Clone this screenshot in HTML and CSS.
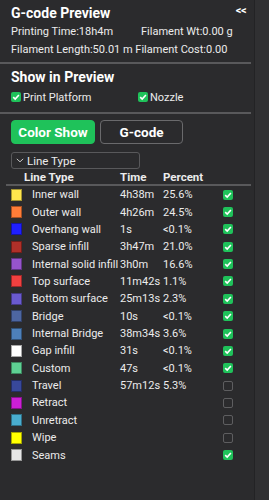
FILE: index.html
```html
<!DOCTYPE html>
<html>
<head>
<meta charset="utf-8">
<link rel="stylesheet" href="styles.css">
</head>
<body>
<div class="app">
  <div class="panel">
    <div class="title-row">
      <span class="title">G-code Preview</span>
      <span class="collapse">&lt;&lt;</span>
    </div>
    <div class="info-row">
      <span class="info-a">Printing Time:18h4m</span>
      <span>Filament Wt:0.00 g</span>
    </div>
    <div class="info-row">
      <span>Filament Length:50.01 m Filament Cost:0.00</span>
    </div>
    <div class="sep"></div>
    <div class="section-title">Show in Preview</div>
    <div class="show-row">
      <label class="opt opt-a"><span class="cb on"><svg viewBox="0 0 10 10"><path d="M2.2 5.2 L4.2 7.1 L7.9 3" /></svg></span>Print Platform</label>
      <label class="opt"><span class="cb on"><svg viewBox="0 0 10 10"><path d="M2.2 5.2 L4.2 7.1 L7.9 3" /></svg></span>Nozzle</label>
    </div>
    <div class="sep"></div>
    <div class="buttons">
      <button class="btn btn-green">Color Show</button>
      <button class="btn btn-dark">G-code</button>
    </div>
    <div class="dropdown">
      <svg class="chev" viewBox="0 0 10 6"><path d="M1 1 L5 4.6 L9 1" /></svg>
      <span>Line Type</span>
    </div>
    <div class="thead">
      <span class="th-name">Line Type</span>
      <span>Time</span>
      <span>Percent</span>
    </div>
    <div class="sep sep-table"></div>
    <div class="rows" id="rows"></div>
  </div>
  <div class="divider"></div>
  <div class="side"></div>
</div>
<script src="script.js"></script>
</body>
</html>
```

FILE: script.js
```js
const data = [
  ["#FFE64D", "Inner wall", "4h38m", "25.6%", true],
  ["#FF7D38", "Outer wall", "4h26m", "24.5%", true],
  ["#1F1FFF", "Overhang wall", "1s", "<0.1%", true],
  ["#B03029", "Sparse infill", "3h47m", "21.0%", true],
  ["#9654CC", "Internal solid infill", "3h0m", "16.6%", true],
  ["#F04040", "Top surface", "11m42s", "1.1%", true],
  ["#6A5AD0", "Bottom surface", "25m13s", "2.3%", true],
  ["#4D66A1", "Bridge", "10s", "<0.1%", true],
  ["#4D80BA", "Internal Bridge", "38m34s", "3.6%", true],
  ["#FFFFFF", "Gap infill", "31s", "<0.1%", true],
  ["#5ED194", "Custom", "47s", "<0.1%", true],
  ["#38489B", "Travel", "57m12s", "5.3%", false],
  ["#CC1FD6", "Retract", "", "", false],
  ["#49ADCF", "Unretract", "", "", false],
  ["#FFFF00", "Wipe", "", "", false],
  ["#E6E6E6", "Seams", "", "", true]
];
const rows = document.getElementById("rows");
for (const [c, n, t, p, on] of data) {
  const r = document.createElement("div");
  r.className = "row";
  const sw = document.createElement("span");
  sw.className = "swatch";
  sw.style.background = c;
  const nm = document.createElement("span");
  nm.className = "name";
  nm.textContent = n;
  const tm = document.createElement("span");
  tm.textContent = t;
  const pc = document.createElement("span");
  pc.textContent = p;
  const cb = document.createElement("span");
  cb.className = "cb " + (on ? "on" : "off");
  if (on) cb.innerHTML = '<svg viewBox="0 0 10 10"><path d="M2.2 5.2 L4.2 7.1 L7.9 3" /></svg>';
  r.append(sw, nm, tm, pc, cb);
  rows.appendChild(r);
}
```

FILE: styles.css
```css
html, body {
  margin: 0;
  padding: 0;
  background: #2b2b2d;
}
body {
  font-family: Roboto, "Noto Sans", sans-serif;
  color: #ececec;
  font-size: 11px;
}
.app {
  display: grid;
  grid-template-columns: 254px 1px 14px;
  width: 269px;
  height: 500px;
  overflow: hidden;
}
.panel {
  background: #2b2b2d;
  min-width: 0;
}
.divider {
  background: #232325;
}
.side {
  background: #303032;
}
.title-row {
  display: flex;
  justify-content: space-between;
  align-items: center;
  padding: 4px 8px 0 11px;
  height: 18px;
}
.title {
  font-weight: 700;
  font-size: 14px;
  color: #fff;
}
.collapse {
  font-size: 11px;
  font-weight: 700;
  color: #fff;
  letter-spacing: -0.5px;
  margin-top: -5px;
}
.info-row {
  display: flex;
  padding-left: 11px;
  height: 18px;
  align-items: center;
  white-space: nowrap;
}
.info-a { width: 130px; }
.sep {
  height: 2px;
  background: #59595b;
  margin: 4px 3px 0 0;
}
.section-title {
  font-weight: 700;
  font-size: 14px;
  color: #fff;
  padding-left: 11px;
  height: 20px;
  line-height: 20px;
  margin-top: 3px;
}
.show-row {
  display: flex;
  padding-left: 11px;
  height: 20px;
  align-items: center;
  margin-bottom: 5px;
}
.opt {
  display: flex;
  align-items: center;
  gap: 2px;
}
.opt-a { width: 127px; }
.cb {
  width: 10px;
  height: 10px;
  box-sizing: border-box;
  border-radius: 2px;
  display: inline-block;
  flex: none;
}
.cb.on { background: #1fc25a; }
.cb.off { border: 1px solid #5e5e60; }
.cb svg {
  display: block;
  width: 10px;
  height: 10px;
}
.cb svg path {
  fill: none;
  stroke: #fff;
  stroke-width: 1.6;
}
.buttons {
  display: flex;
  gap: 5px;
  padding-left: 11px;
  margin-top: 6px;
}
.btn {
  height: 24px;
  width: 84px;
  border-radius: 4px;
  font-family: inherit;
  font-weight: 700;
  font-size: 13.5px;
  color: #fff;
  padding: 0;
}
.btn-green {
  background: #1fc25a;
  border: 1px solid #1fc25a;
}
.btn-dark {
  background: #2b2b2d;
  border: 1px solid #6a6a6c;
  width: 83px;
}
.dropdown {
  margin: 8px 0 0 11px;
  width: 129px;
  height: 17px;
  box-sizing: border-box;
  border: 1px solid #59595b;
  border-radius: 3px;
  display: flex;
  align-items: center;
  gap: 3px;
  padding-left: 4px;
  font-size: 11.5px;
}
.chev {
  width: 8px;
  height: 5px;
}
.chev path {
  fill: none;
  stroke: #ddd;
  stroke-width: 1.1;
}
.thead {
  display: grid;
  grid-template-columns: 96px 43px 60px;
  padding-left: 24px;
  height: 15px;
  align-items: center;
  font-weight: 700;
  font-size: 11.5px;
}
.sep-table {
  margin: 0 3px 0 6px;
}
.row {
  display: grid;
  grid-template-columns: 11px 98px 43px 60px 10px;
  padding-left: 11px;
  height: 17.37px;
  align-items: center;
  white-space: nowrap;
}
.swatch {
  width: 11px;
  height: 12px;
  box-sizing: border-box;
  border: 1px solid rgba(0,0,0,0.35);
}
.name {
  padding-left: 10px;
}
```
